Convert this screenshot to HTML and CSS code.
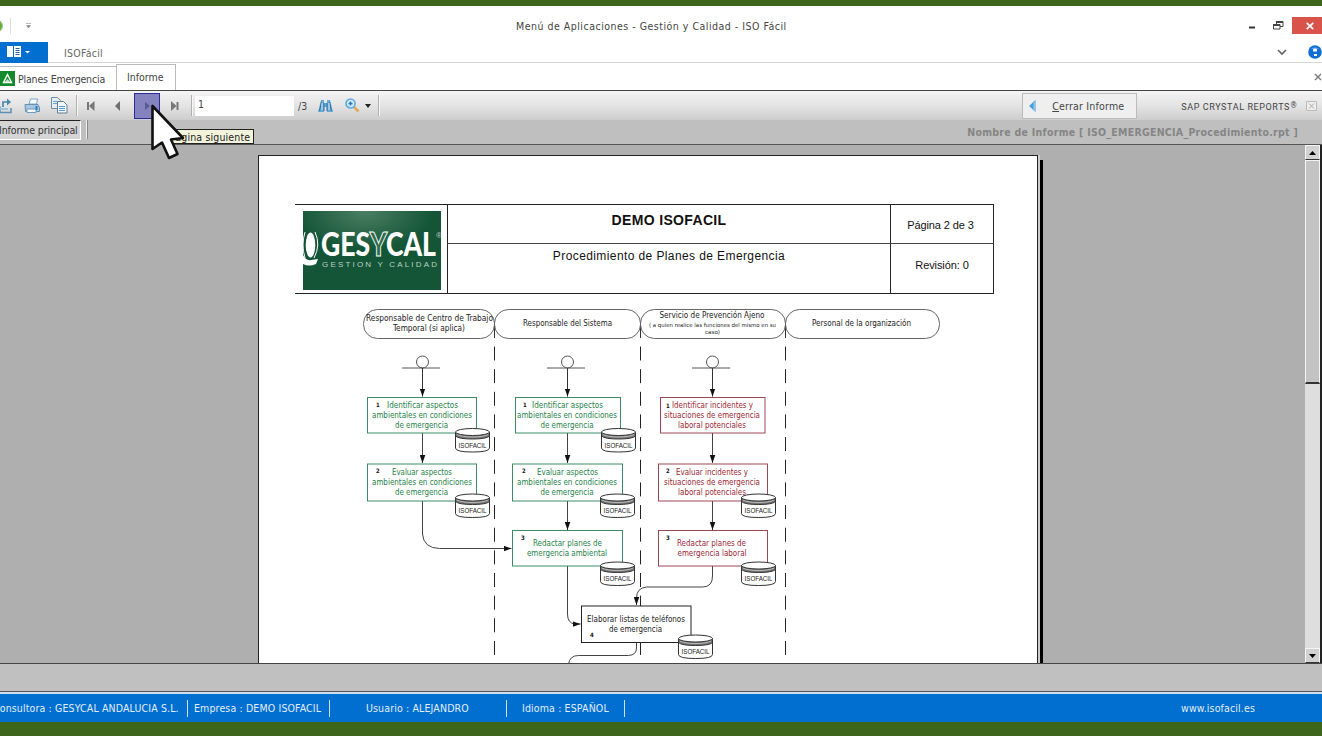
FILE: index.html
```
<!DOCTYPE html>
<html lang="es">
	<head>
		<title>Menú de Aplicaciones - Gestión y Calidad - ISO Fácil</title>
		<meta charset="utf-8">
		<link rel="stylesheet" href="styles.css">
	</head>
	<body>
		<div class="window">
			<header class="titlebar">
				<svg class="app-orb" width="6" height="16"><circle cx="-4" cy="8" r="6.5" fill="#5cb531" stroke="#b9b9a0"/></svg>
				<span class="quick-sep"></span>
				<svg class="quick-arrow" width="6" height="6"><path d="M0 .5h5M.5 2.5h4L2.500 5z" fill="#8a8a8a" stroke="#8a8a8a" stroke-width=".6"/></svg>
				<h1 class="title">Menú de Aplicaciones - Gestión y Calidad - ISO Fácil</h1>
				<div class="win-buttons">
					<svg width="8" height="16"><path d="M1 9.500h6" stroke="#333" stroke-width="2"/></svg>
					<svg width="11" height="16"><g fill="#fff" stroke="#444"><path d="M3.500 3.500h6.500v5h-6.500z"/><path d="M3 4h7" stroke-width="2"/><path d="M.5 6.500h6.500v4.500h-6.500z"/><path d="M0 7h7" stroke-width="2"/></g></svg>
					<span class="close"><svg width="8" height="8"><path d="M.7.9l6.600 6.200M7.300.9L.7 7.100" stroke="#fff" stroke-width="1.800"/></svg></span>
				</div>
			</header>

			<nav class="ribbon">
				<button class="file-button">
					<svg width="24" height="12"><path d="M0 0h14v11H0z" fill="#fff"/><path d="M6.500 0v11" stroke="#0a6ccc"/><path d="M8.500 2.500h4M8.500 4.500h4M8.500 6.500h4M8.500 8.500h4" stroke="#2a5e94"/><path d="M18 5h5l-2.500 2.500z" fill="#fff"/></svg>
				</button>
				<span class="ribbon-tab">ISOFácil</span>
				<svg class="chevron" width="10" height="7"><path d="M1 1l4 4 4-4" fill="none" stroke="#666" stroke-width="1.700"/></svg>
				<svg class="help" width="14" height="14"><circle cx="7" cy="7" r="6.800" fill="#0f6fd4"/><path d="M3 4a5 3.500 0 0 1 8 0" fill="#4fa2ee"/><path d="M5 4.500q2-2 4 0v2H5zM6 9h3v2H6z" fill="#fff"/></svg>
			</nav>

			<div class="tabs">
				<span class="tab tab-planes">
					<svg width="15" height="15"><path d="M0 0h15v15H0z" fill="#128b2c"/><path d="M7.500 3.500l4 8h-8z" fill="#128b2c" stroke="#fff" stroke-width="1.400"/><path d="M5 11l2.500-3 2.500 3" fill="#cfe8d2"/></svg>
					<span>Planes Emergencia</span>
				</span>
				<span class="tab tab-active"><span>Informe</span></span>
				<svg class="tab-close" width="8" height="8"><path d="M1 1l6 6M7 1L1 7" stroke="#777" stroke-width="1.400"/></svg>
			</div>

			<div class="toolbar">
				<svg class="ico-export" width="12" height="16"><path d="M0 8.500V14.500h11V10" fill="none" stroke="#5b8fb5" stroke-width="1.500"/><path d="M0 11h8" stroke="#9cc3dd" stroke-width="2"/><path d="M3 9V4h5" fill="none" stroke="#4a86ad" stroke-width="1.700"/><path d="M7 .5l4 3.500-4 3.500z" fill="#4a86ad"/></svg>
				<svg class="ico-print" width="16" height="16"><path d="M5 6l1.500-5h7L12.500 6z" fill="#f7fbff" stroke="#78a9cd"/><path d="M1 6.500h13l1.500 3v4h-14z" fill="#a9c6dd" stroke="#6591b3"/><path d="M3 11h9v3.500H3z" fill="#fff" stroke="#6b9dc4"/><path d="M12.500 8v4" stroke="#2d7fc1" stroke-width="2"/></svg>
				<svg class="ico-copy" width="17" height="17"><path d="M.5.500h6l3 3v8h-9z" fill="#e5edf3" stroke="#738c9f"/><path d="M2 4.500h5M2 6.500h5" stroke="#6ea6d2"/><path d="M6.500 4.500h6l3.500 3.500v8h-9.500z" fill="#f0f6fb" stroke="#627f95"/><path d="M8 9.500h6M8 11.500h6M8 13.500h6" stroke="#5a9bd0"/></svg>
				<span class="sep sep-nav"></span>
				<svg class="ico-first" width="8" height="10"><path d="M1 1v8" stroke="#777" stroke-width="2"/><path d="M7.500 0v10L2 5z" fill="#777"/></svg>
				<svg class="ico-prev" width="6" height="10"><path d="M5 0v10L0 5z" fill="#6f6f6f"/></svg>
				<button class="next"><svg width="6" height="8"><path d="M1 0v8l5-4z" fill="#5b5b91"/></svg></button>
				<svg class="ico-last" width="8" height="10"><path d="M6.500 1v8" stroke="#777" stroke-width="2"/><path d="M0 0v10l5.500-5z" fill="#777"/></svg>
				<span class="sep sep-page"></span>
				<span class="page-input">1</span>
				<span class="page-total">/3</span>
				<svg class="ico-find" width="15" height="14"><path d="M3 1h3v3h3V1h3l3 12H9V8H6v5H0z" fill="#66a9d6"/><path d="M3.500 3L1.500 12M11.500 3l2 9M6 4v8M9 4v8" stroke="#2f6d9c"/><path d="M4 4v7M11 4v7" stroke="#d2e9f8"/></svg>
				<svg class="ico-zoom" width="15" height="15"><path d="M9 9l4.500 4.500" stroke="#e0a85d" stroke-width="2.500"/><circle cx="5.500" cy="5.500" r="4.500" fill="#d3ebfc" stroke="#62abe0" stroke-width="1.700"/><path d="M3.500 5.500h4M5.500 3.500v4" stroke="#2c78b3" stroke-width="1.500"/></svg>
				<svg class="ico-caret" width="6" height="4"><path d="M0 0h6L3 4z" fill="#222"/></svg>
				<span class="sep sep-end"></span>
				<button class="close-report">
					<svg width="7" height="12"><path d="M6.500 0v12L0 6z" fill="#4d9ed8"/><path d="M6.500 0v12l-2-2V3z" fill="#8fc5ea"/></svg>
					<span><u>C</u>errar Informe</span>
				</button>
				<span class="brand">SAP CRYSTAL REPORTS</span><span class="brand-reg">®</span>
				<svg class="ico-broken" width="11" height="10"><path d="M.5.500h10v9H.5z" fill="#eee" stroke="#bbb"/><path d="M3 2.500l5 5M8 2.500l-5 5" stroke="#aaa"/></svg>
			</div>

			<div class="report-bar">
				<span class="report-tab">Informe principal</span>
				<span class="report-sep"></span>
				<span class="report-name">Nombre de Informe [ ISO_EMERGENCIA_Procedimiento.rpt ]</span>
			</div>

			<main class="viewer">
				<article class="page">
					<div class="sheet-head">
						<div class="logo-cell">
							<svg class="logo" width="138" height="79" viewBox="0 0 138 79">
								<defs>
									<radialGradient id="glow" cx=".45" cy="0" r=".5"><stop offset="0" stop-color="#4b7f63"/><stop offset="1" stop-color="#145537"/></radialGradient>
								</defs>
								<path d="M0 0h138v79H0z" fill="url(#glow)"/>
								<ellipse cx="7.500" cy="34" rx="4.800" ry="12.500" fill="#fff"/>
								<path d="M2 21q-4 13 0 26M12 21q6 13-1 26" fill="none" stroke="#fff"/>
								<path d="M0 44q3 6 8 5l7-1-2 5q-7 3-13 0z" fill="#fff"/>
								<text class="logo-name" x="18" y="45" textLength="115" lengthAdjust="spacingAndGlyphs">GES<tspan class="logo-y">Y</tspan>CAL</text>
								<text class="logo-sub" x="19" y="55.500" textLength="115">GESTION Y CALIDAD</text>
								<text class="logo-sub" x="133" y="27">®</text>
							</svg>
						</div>
						<div class="company">DEMO ISOFACIL</div>
						<div class="page-no">Página 2 de 3</div>
						<div class="procedure">Procedimiento de Planes de Emergencia</div>
						<div class="revision">Revisión: 0</div>
					</div>

					<svg class="flow" width="595" height="363" viewBox="355 300 595 363">
						<defs>
							<marker id="arrow" markerUnits="userSpaceOnUse" markerWidth="9" markerHeight="6" refX="8" refY="3" orient="auto"><path d="M0 0.200L8 3 0 5.800z" fill="#111"/></marker>
							<g id="db">
								<path d="M.5 4v16q0 4 17 4t17-4V4" fill="#fff" stroke="#333"/>
								<path d="M.5 4v4q3 3 17 3t17-3V4" fill="#777" stroke="#333"/>
								<path d="M2 6.500q5 2.500 15.500 2.500T33 6.500" fill="none" stroke="#ccc" stroke-width=".8"/>
								<ellipse cx="17.500" cy="4" rx="17" ry="3.500" fill="#fff" stroke="#333"/>
								<text class="db-name" x="3.500" y="19.500" textLength="28" lengthAdjust="spacingAndGlyphs">ISOFACIL</text>
							</g>
							<g id="actor">
								<circle cx="0" cy="6.500" r="6" fill="#fff" stroke="#555"/>
								<path d="M-20.500 12.500h38" stroke="#555"/>
								<path d="M0 12.500v28.500" stroke="#333" marker-end="url(#arrow)"/>
							</g>
						</defs>

						<!-- lanes -->
						<g fill="none" stroke="#222" stroke-dasharray="14 8.650">
							<path d="M494.500 346.500V663"/>
							<path d="M640.500 346.500V657"/>
							<path d="M785.500 346.500V657"/>
						</g>
						<path d="M494.500 323v15M640.500 323v15M785.500 323v15" stroke="#333"/>
						<g fill="none" stroke="#666">
							<rect x="363.500" y="309.500" width="131" height="29" rx="14"/>
							<rect x="494.500" y="309.500" width="146" height="29" rx="14"/>
							<rect x="640.500" y="309.500" width="145" height="29" rx="14"/>
							<rect x="785.500" y="309.500" width="154" height="29" rx="14"/>
						</g>
						<g class="label">
							<text x="366" y="321" textLength="127" lengthAdjust="spacingAndGlyphs">Responsable de Centro de Trabajo</text>
							<text x="393" y="331" textLength="72" lengthAdjust="spacingAndGlyphs">Temporal (si aplica)</text>
							<text x="523" y="326" textLength="89" lengthAdjust="spacingAndGlyphs">Responsable del Sistema</text>
							<text x="659.500" y="318" textLength="105" lengthAdjust="spacingAndGlyphs">Servicio de Prevención Ajeno</text>
							<text class="tiny" x="649" y="327" textLength="127" lengthAdjust="spacingAndGlyphs">( a quien realice las funciones del mismo en su</text>
							<text class="tiny" x="705" y="334" textLength="15" lengthAdjust="spacingAndGlyphs">caso)</text>
							<text x="812" y="326" textLength="99" lengthAdjust="spacingAndGlyphs">Personal de la organización</text>
						</g>

						<use href="#actor" x="422.500" y="355.500"/>
						<use href="#actor" x="567.500" y="355.500"/>
						<use href="#actor" x="712.500" y="355.500"/>

						<!-- connectors -->
						<g fill="none" stroke="#444">
							<path d="M422.500 433v30" marker-end="url(#arrow)"/>
							<path d="M567.500 433v30" marker-end="url(#arrow)"/>
							<path d="M712.500 433v30" marker-end="url(#arrow)"/>
							<path d="M567.500 501v29" marker-end="url(#arrow)"/>
							<path d="M712.500 501v29" marker-end="url(#arrow)"/>
							<path d="M422.500 501v33q1 14 17 14.500h72" marker-end="url(#arrow)"/>
							<path d="M567.500 566v48q0 9 7 10h6" marker-end="url(#arrow)"/>
							<path d="M712.500 566v10q0 11-10 11h-56q-10 1-10 11v7" marker-end="url(#arrow)"/>
							<path d="M636.500 643v5q0 7-8 7.500h-50q-9 0-10 9"/>
						</g>

						<!-- activities -->
						<g class="label green">
							<rect x="367.500" y="397.500" width="109" height="35.500"/>
							<rect x="515.500" y="397.500" width="105" height="35.500"/>
							<rect x="367.500" y="464" width="109" height="37"/>
							<rect x="512.500" y="464" width="110" height="37"/>
							<rect x="512.500" y="530.500" width="110" height="35.500"/>
							<text x="387" y="407.500" textLength="71" lengthAdjust="spacingAndGlyphs">Identificar aspectos</text>
							<text x="372" y="417.500" textLength="100" lengthAdjust="spacingAndGlyphs">ambientales en condiciones</text>
							<text x="395" y="427.500" textLength="53" lengthAdjust="spacingAndGlyphs">de emergencia</text>
							<text x="532" y="407.500" textLength="71" lengthAdjust="spacingAndGlyphs">Identificar aspectos</text>
							<text x="517" y="417.500" textLength="100" lengthAdjust="spacingAndGlyphs">ambientales en condiciones</text>
							<text x="540.500" y="427.500" textLength="53" lengthAdjust="spacingAndGlyphs">de emergencia</text>
							<text x="392" y="474.500" textLength="60" lengthAdjust="spacingAndGlyphs">Evaluar aspectos</text>
							<text x="372" y="485" textLength="100" lengthAdjust="spacingAndGlyphs">ambientales en condiciones</text>
							<text x="395" y="495" textLength="53" lengthAdjust="spacingAndGlyphs">de emergencia</text>
							<text x="537" y="474.500" textLength="61" lengthAdjust="spacingAndGlyphs">Evaluar aspectos</text>
							<text x="517" y="485" textLength="100" lengthAdjust="spacingAndGlyphs">ambientales en condiciones</text>
							<text x="540.500" y="495" textLength="53" lengthAdjust="spacingAndGlyphs">de emergencia</text>
							<text x="533" y="545.500" textLength="69" lengthAdjust="spacingAndGlyphs">Redactar planes de</text>
							<text x="527" y="555.500" textLength="80" lengthAdjust="spacingAndGlyphs">emergencia ambiental</text>
						</g>
						<g class="label red">
							<rect x="660.500" y="397.500" width="104.500" height="35.500"/>
							<rect x="658.500" y="464" width="109" height="37"/>
							<rect x="658.500" y="530.500" width="109" height="35.500"/>
							<text x="672" y="407.500" textLength="81" lengthAdjust="spacingAndGlyphs">Identificar incidentes y</text>
							<text x="664" y="417.500" textLength="96" lengthAdjust="spacingAndGlyphs">situaciones de emergencia</text>
							<text x="678" y="427.500" textLength="68" lengthAdjust="spacingAndGlyphs">laboral potenciales</text>
							<text x="676" y="474.500" textLength="72" lengthAdjust="spacingAndGlyphs">Evaluar incidentes y</text>
							<text x="664" y="485" textLength="96" lengthAdjust="spacingAndGlyphs">situaciones de emergencia</text>
							<text x="678" y="495" textLength="68" lengthAdjust="spacingAndGlyphs">laboral potenciales</text>
							<text x="677" y="545.500" textLength="69" lengthAdjust="spacingAndGlyphs">Redactar planes de</text>
							<text x="677.500" y="555.500" textLength="69" lengthAdjust="spacingAndGlyphs">emergencia laboral</text>
						</g>
						<g class="label black">
							<rect x="581.500" y="606" width="109.500" height="36.500"/>
							<text x="587" y="621.500" textLength="98" lengthAdjust="spacingAndGlyphs">Elaborar listas de teléfonos</text>
							<text x="609" y="631.500" textLength="53" lengthAdjust="spacingAndGlyphs">de emergencia</text>
						</g>
						<g class="step">
							<text x="376" y="407">1</text>
							<text x="523" y="407">1</text>
							<text x="666" y="407.500">1</text>
							<text x="376" y="473">2</text>
							<text x="522" y="473">2</text>
							<text x="666" y="473">2</text>
							<text x="521" y="540">3</text>
							<text x="666" y="540">3</text>
							<text x="590" y="636.500">4</text>
						</g>

						<use href="#db" x="455" y="428"/>
						<use href="#db" x="601" y="428"/>
						<use href="#db" x="455" y="493.500"/>
						<use href="#db" x="600" y="493.500"/>
						<use href="#db" x="741" y="493.500"/>
						<use href="#db" x="600" y="561.500"/>
						<use href="#db" x="741" y="561.500"/>
						<use href="#db" x="678" y="634.500"/>
					</svg>
				</article>

				<div class="scrollbar">
					<span class="scroll-btn"><svg width="7" height="4"><path d="M0 4h7L3.500 0z"/></svg></span>
					<span class="scroll-thumb"></span>
					<span class="scroll-track"></span>
					<span class="scroll-btn"><svg width="7" height="4"><path d="M0 0h7L3.500 4z"/></svg></span>
				</div>
			</main>

			<div class="viewer-foot"></div>

			<footer class="status">
				<span class="st st-consultora"><span>Consultora : GESYCAL ANDALUCIA S.L.</span></span>
				<span class="st st-empresa"><span>Empresa : DEMO ISOFACIL</span></span>
				<span class="st st-usuario"><span>Usuario : ALEJANDRO</span></span>
				<span class="st st-idioma"><span>Idioma : ESPAÑOL</span></span>
				<span class="st-web">www.isofacil.es</span>
			</footer>

			<div class="tooltip">Página siguiente</div>
			<svg class="cursor" width="42" height="62"><path d="M4.500 5v43l9.500-6.500 7 15.500 8.500-4-6.500-14.500 12-1.500z" fill="#fff" stroke="#111" stroke-width="2.600" stroke-linejoin="round"/></svg>
		</div>
	</body>
</html>
```
FILE: styles.css
```
*{
	box-sizing: border-box;
}
body{
	margin: 0;
	background-color: #3d651b;
	font-family: 'DejaVu Sans Condensed', 'DejaVu Sans', sans-serif;
	font-stretch: condensed;
	font-size: 10.5px;
	color: #444;
	overflow: hidden;
}
svg{
	display: block;
	flex: none;
}
button{
	font: inherit;
	color: inherit;
	letter-spacing: inherit;
	padding: 0;
	border: 0;
}
.window{
	position: relative;
	width: 1322px;
	height: 736px;
	padding: 6px 0 14px;
	overflow: hidden;
	display: flex;
	flex-direction: column;
	white-space: nowrap;
}

/* title bar */
.titlebar{
	height: 36px;
	background-color: #fff;
	display: flex;
	align-items: center;
	padding-top: 3px;
}
.quick-sep{
	width: 1px;
	height: 16px;
	margin: 0 15px 0 4px;
	background-color: #ddd;
}
.title{
	margin: 0 auto 0 484px;
	font-size: 10.5px;
	font-weight: normal;
	letter-spacing: .5px;
}
.win-buttons{
	display: flex;
	align-items: center;
	gap: 17px;
}
.close{
	width: 30px;
	height: 17px;
	margin-left: -9px;
	background-color: #d9534a;
	display: flex;
	align-items: center;
	justify-content: center;
	padding-left: 6px;
}

/* ribbon */
.ribbon{
	height: 21px;
	background-color: #fff;
	border-bottom: 1px solid #d6d6d6;
	display: flex;
	align-items: center;
}
.file-button{
	width: 48px;
	height: 21px;
	padding-left: 7px;
	background-color: #006fd0;
}
.ribbon-tab{
	margin-left: 16px;
	padding-top: 2px;
	letter-spacing: .25px;
	color: #666;
}
.chevron{
	margin-left: auto;
}
.help{
	margin: 0 0 0 21px;
}

/* document tabs */
.tabs{
	height: 28px;
	background-color: #fff;
	border-bottom: 1px solid #444;
	display: flex;
	align-items: flex-end;
}
.tab{
	display: flex;
	align-items: center;
	border: 1px solid #bbb;
	border-bottom: 0;
}
.tab-planes{
	width: 116px;
	height: 24px;
	gap: 3px;
	border-left: 0;
	border-right: 0;
	letter-spacing: -.17px;
}
.tab-active{
	width: 60px;
	height: 26px;
	padding: 0 0 1px 10px;
}
.tab-close{
	margin: 0 0 9px auto;
}

/* toolbar */
.toolbar{
	height: 29px;
	background: linear-gradient(#f4f4f4, #e4e4e4 50%, #cdcdcd);
	display: flex;
	align-items: center;
}
.sep{
	width: 2px;
	height: 21px;
	border-left: 1px solid #b0b0b0;
	border-right: 1px solid #f8f8f8;
}
.ico-print{
	margin-left: 12px;
}
.ico-copy{
	margin-left: 11px;
}
.sep-nav{
	margin: 0 9px 0 8px;
}
.ico-prev{
	margin: 0 13px 0 20px;
}
.next{
	width: 26px;
	height: 26px;
	border: 1px solid #2e2a9c;
	background-color: #8482bf;
	display: flex;
	align-items: center;
	justify-content: center;
}
.ico-last{
	margin: 0 12px 0 11px;
}
.page-input{
	width: 99px;
	height: 20px;
	margin-left: 2px;
	padding-left: 3px;
	background-color: #fff;
	line-height: 17px;
}
.page-total{
	width: 20px;
	margin-left: 4px;
}
.ico-zoom{
	margin: 0 5px 0 12px;
}
.sep-end{
	margin-left: 7px;
}
.close-report{
	width: 115px;
	height: 26px;
	margin: 0 44px 0 auto;
	padding-left: 6px;
	border: 1px solid #bbb;
	background-color: #efefef;
	display: flex;
	align-items: center;
	gap: 16px;
	letter-spacing: .2px;
}
.brand{
	font-family: Roboto, sans-serif;
	font-stretch: normal;
	font-size: 9px;
	letter-spacing: .6px;
	padding-top: 2px;
}
.brand-reg{
	width: 6px;
	font-size: 8px;
}
.ico-broken{
	margin: 0 5px 0 10px;
}

/* report name row */
.report-bar{
	height: 25px;
	background-color: #bfbfbf;
	border-bottom: 1px solid #555;
	display: flex;
	align-items: flex-start;
}
.report-tab{
	width: 82px;
	height: 20px;
	padding-top: 3px;
	margin-left: -1px;
	letter-spacing: -.1px;
	color: #333;
	background-color: #d4d4d4;
	border-top: 1px solid #222;
	border-right: 1px solid #fff;
	border-bottom: 1px solid #fff;
}
.report-sep{
	width: 2px;
	height: 19px;
	margin-left: 5px;
	border-left: 1px solid #eee;
	border-right: 1px solid #888;
}
.report-name{
	margin: 6px 24px 0 auto;
	color: #858585;
	font-weight: bold;
	font-size: 10.5px;
	letter-spacing: .27px;
}

/* viewer */
.viewer{
	height: 519px;
	background-color: #afafaf;
	border-bottom: 1px solid #444;
	display: flex;
	overflow: hidden;
}
.page{
	width: 780px;
	height: 560px;
	margin: 10px 0 0 258px;
	background-color: #fff;
	border: 1px solid #222;
	box-shadow: 2px 0 0 #ccc, 5px 5px 0 #000;
	flex: none;
}
.sheet-head{
	width: 699px;
	height: 90px;
	margin: 48px 0 0 36px;
	display: grid;
	grid-template: 39px 50px / 152px 443px 104px;
	border-top: 1px solid #222;
	font-family: 'Liberation Sans', sans-serif;
	font-stretch: normal;
	color: #111;
	text-align: center;
}
.logo-cell{
	grid-row: 1 / 3;
	padding: 6px 0 0 8px;
	border-bottom: 1px solid #222;
}
.company,
.page-no{
	border-left: 1px solid #222;
	border-bottom: 1px solid #444;
}
.procedure,
.revision{
	border-left: 1px solid #222;
	border-bottom: 1px solid #222;
}
.page-no,
.revision{
	border-right: 1px solid #222;
	font-size: 11px;
	letter-spacing: -.1px;
}
.company{
	padding-top: 7px;
	font-size: 14px;
	font-weight: bold;
	letter-spacing: .35px;
}
.procedure{
	padding-top: 5px;
	font-size: 12px;
	letter-spacing: .4px;
}
.page-no{
	padding: 14px 3px 0 0;
}
.revision{
	padding-top: 15px;
}
.logo-name{
	font: 900 32px Lato, sans-serif;
	fill: #fff;
}
.logo-y{
	fill: #2c6a4c;
	stroke: #fff;
	stroke-width: 1px;
}
.logo-sub{
	font: 8px 'Liberation Sans', sans-serif;
	fill: #b9d0c3;
}

/* flow chart */
.flow{
	margin: 6px 0 0 96px;
}
.label{
	font-size: 8px;
	fill: #222;
}
.label rect{
	fill: #fff;
}
.green{
	fill: #258247;
}
.green rect{
	stroke: #3b8c66;
}
.red{
	fill: #9c2634;
}
.red rect{
	stroke: #9d4653;
}
.black rect{
	stroke: #222;
}
.label .tiny{
	font-size: 5.5px;
}
.step{
	font-size: 6px;
	font-weight: bold;
	fill: #111;
}
.db-name{
	font-family: 'Liberation Sans', sans-serif;
	font-size: 7px;
	fill: #222;
}

/* classic scroll bar */
.scrollbar{
	width: 17px;
	margin-left: auto;
	display: flex;
	flex-direction: column;
	border-right: 2px solid #222;
	background-color: #dedede;
}
.scroll-btn{
	height: 15px;
	display: flex;
	align-items: center;
	justify-content: center;
	background-color: #d2d2d2;
	border: 1px solid #f5f5f5;
	border-bottom-color: #333;
	flex: none;
}
.scroll-thumb{
	height: 224px;
	background-color: #c3c3c3;
	border: 1px solid #f5f5f5;
	border-bottom: 2px solid #333;
}
.scroll-track{
	flex: 1;
}
.viewer-foot{
	height: 30px;
	background-color: #c0c0c0;
	border-bottom: 2px solid #cfe2f3;
	box-shadow: inset 0 -1px #555;
}

/* status bar */
.status{
	flex: 1;
	background-color: #006fd0;
	color: #e2eefa;
	letter-spacing: .14px;
	display: flex;
	align-items: center;
}
.st{
	height: 17px;
	line-height: 17px;
	border-right: 1px solid #cfe2f3;
}
.st-consultora{
	width: 188px;
}
.st-consultora span{
	margin-left: -7px;
}
.st-empresa{
	width: 142px;
	padding-left: 6px;
}
.st-usuario{
	width: 177px;
	padding-left: 36px;
}
.st-idioma{
	width: 118px;
	padding-left: 15px;
}
.st-web{
	margin: 0 67px 0 auto;
}

/* overlays */
.tooltip{
	position: absolute;
	left: 166px;
	top: 129px;
	width: 88px;
	height: 15px;
	padding-left: 3px;
	line-height: 14px;
	letter-spacing: .15px;
	color: #222;
	background-color: #f3f3dc;
	border: 1px solid #222;
}
.cursor{
	position: absolute;
	left: 148px;
	top: 101px;
}
```
